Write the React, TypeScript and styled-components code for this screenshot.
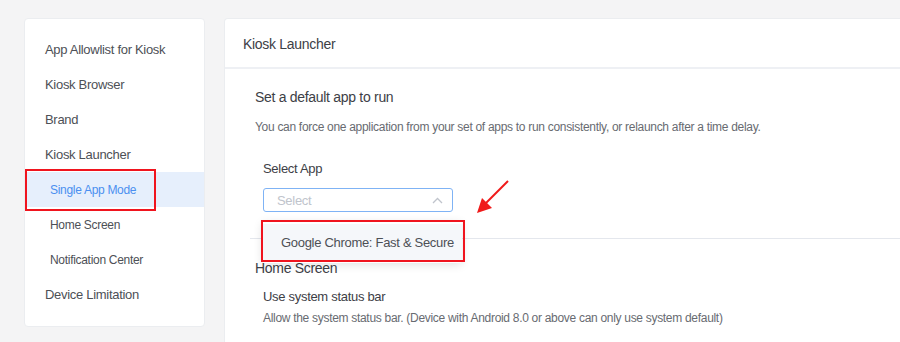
import React from "react";
import styled, { createGlobalStyle } from "styled-components";

const Global = createGlobalStyle`
  html, body { margin: 0; padding: 0; background: #f4f4f5; overflow: hidden; }
  body { font-family: "Liberation Sans", Arial, sans-serif; color: #333; letter-spacing: -0.3px; }
  * { box-sizing: border-box; }
`;

const Page = styled.div`
  display: flex;
  align-items: stretch;
  gap: 19px;
  padding: 18px 0 0 24px;
  height: 342px;
  overflow: hidden;
`;

const Sidebar = styled.nav`
  position: relative;
  align-self: flex-start;
  width: 181px;
  flex: none;
  background: #fff;
  border: 1px solid #ebedf0;
  border-radius: 4px;
  padding: 13px 0 14px;
`;

const NavItem = styled.div<{ $sub?: boolean; $active?: boolean }>`
  height: 35px;
  display: flex;
  align-items: center;
  padding-left: ${(p) => (p.$sub ? 25 : 20)}px;
  font-size: ${(p) => (p.$sub ? 12 : 13)}px;
  color: ${(p) => (p.$active ? "#4b8ff0" : "#4d5056")};
  background: ${(p) => (p.$active ? "#e6effc" : "transparent")};
`;

const Highlight = styled.div<{ $l: number; $t: number; $w: number; $h: number }>`
  position: absolute;
  left: ${(p) => p.$l}px;
  top: ${(p) => p.$t}px;
  width: ${(p) => p.$w}px;
  height: ${(p) => p.$h}px;
  border: 2px solid #f0141e;
  pointer-events: none;
`;

const Main = styled.section`
  flex: 1;
  margin-right: -6px;
  background: #fff;
  border: 1px solid #ebedf0;
  border-bottom: 0;
  border-radius: 4px 4px 0 0;
`;

const Header = styled.div`
  height: 50px;
  display: flex;
  align-items: center;
  padding: 2px 0 0 18px;
  font-size: 14px;
  color: #3d4046;
  border-bottom: 2px solid #eef0f4;
`;

const Body = styled.div`
  padding: 18px 0 0 25px;
`;

const Section = styled.div`
  padding-left: 5px;
`;

const Title = styled.div<{ $mt?: number }>`
  font-size: 14px;
  line-height: 20px;
  color: #3d4046;
  margin-top: ${(p) => p.$mt ?? 0}px;
`;

const Desc = styled.div<{ $mt: number }>`
  font-size: 12px;
  line-height: 18px;
  color: #686b71;
  margin-top: ${(p) => p.$mt}px;
  white-space: nowrap;
`;

const FormItem = styled.div<{ $mt: number }>`
  padding-left: 8px;
  margin-top: ${(p) => p.$mt}px;
`;

const Label = styled.div`
  font-size: 13px;
  line-height: 20px;
  color: #3d4046;
`;

const SelectWrap = styled.div`
  position: relative;
  width: 190px;
  margin-top: 9px;
`;

const SelectBox = styled.div`
  height: 24px;
  border: 1px solid #7fb3f5;
  border-radius: 3px;
  display: flex;
  align-items: center;
  justify-content: space-between;
  padding: 0 9px 0 13px;
  font-size: 13px;
  color: #c0c4cc;
`;

const Dropdown = styled.div`
  position: absolute;
  left: -1px;
  top: 33px;
  width: 200px;
  background: #fff;
  box-shadow: 0 2px 10px rgba(0, 0, 0, 0.12);
  border-radius: 3px;
  padding: 3px 0;
  z-index: 2;
`;

const Option = styled.div`
  height: 36px;
  display: flex;
  align-items: center;
  padding-left: 19px;
  font-size: 13px;
  color: #4d5056;
  background: #f5f7fa;
  white-space: nowrap;
`;

const Divider = styled.div`
  height: 1px;
  background: #e4e7ed;
  margin-top: 26px;
`;

const Arrow = styled.svg`
  position: absolute;
  left: 210px;
  top: -7px;
  overflow: visible;
`;

export default function App() {
  return (
    <>
      <Global />
      <Page>
        <Sidebar>
          <NavItem>App Allowlist for Kiosk</NavItem>
          <NavItem>Kiosk Browser</NavItem>
          <NavItem>Brand</NavItem>
          <NavItem>Kiosk Launcher</NavItem>
          <NavItem $sub $active>Single App Mode</NavItem>
          <NavItem $sub>Home Screen</NavItem>
          <NavItem $sub>Notification Center</NavItem>
          <NavItem>Device Limitation</NavItem>
          <Highlight $l={0} $t={150} $w={131} $h={42} />
        </Sidebar>
        <Main>
          <Header>Kiosk Launcher</Header>
          <Body>
            <Section>
              <Title>Set a default app to run</Title>
              <Desc $mt={11}>
                You can force one application from your set of apps to run consistently, or relaunch after a time delay.
              </Desc>
              <FormItem $mt={23}>
                <Label>Select App</Label>
                <SelectWrap>
                  <SelectBox>
                    <span>Select</span>
                    <svg width="11" height="7" viewBox="0 0 11 7">
                      <path d="M1 6 L5.5 1.5 L10 6" fill="none" stroke="#c0c4cc" strokeWidth="1.3" />
                    </svg>
                  </SelectBox>
                  <Dropdown>
                    <Option>Google Chrome: Fast &amp; Secure</Option>
                    <Highlight $l={-1} $t={-1} $w={204} $h={42} />
                  </Dropdown>
                  <Arrow width="45" height="45" viewBox="0 0 45 45">
                    <line x1="35" y1="0" x2="12" y2="23" stroke="#f01a1a" strokeWidth="2" />
                    <polygon points="4,32 9,17 19,27" fill="#f01a1a" />
                  </Arrow>
                </SelectWrap>
              </FormItem>
            </Section>
            <Divider />
            <Section>
              <Title $mt={19}>Home Screen</Title>
              <FormItem $mt={9}>
                <Label>Use system status bar</Label>
                <Desc $mt={2}>
                  Allow the system status bar. (Device with Android 8.0 or above can only use system default)
                </Desc>
              </FormItem>
            </Section>
          </Body>
        </Main>
      </Page>
    </>
  );
}
